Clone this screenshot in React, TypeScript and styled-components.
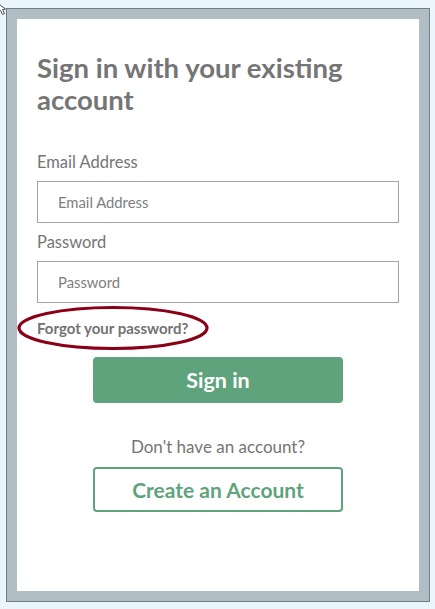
import React from 'react';
import styled, { createGlobalStyle } from 'styled-components';

const GlobalStyle = createGlobalStyle`
    html, body {
        margin: 0;
        padding: 0;
        background: #EAF5FC;
    }
    body {
        font-family: "Lato", "Liberation Sans", sans-serif;
    }
`;

export default function App() {
    return (
        <>
            <GlobalStyle />
            <Page>
                <Cursor viewBox="0 0 8 16" width="8" height="16">
                    <path d="M-5 1.5 L5.5 9 L2.5 9.5 L4.5 13.5 L2.5 14.5 L0.5 10.5 L-2 13 Z" fill="#fff" stroke="#3A3A3A" strokeWidth="0.9" />
                </Cursor>
                <Frame>
                    <Panel>
                        <Title>Sign in with your existing account</Title>

                        <Field>
                            <Label htmlFor="email">Email Address</Label>
                            <Input id="email" type="email" placeholder="Email Address" />
                        </Field>

                        <Field>
                            <Label htmlFor="password">Password</Label>
                            <Input id="password" type="password" placeholder="Password" />
                        </Field>

                        <ForgotWrap>
                            <ForgotLink href="#">Forgot your password?</ForgotLink>
                            <Circle viewBox="0 0 196 46" width="196" height="46">
                                <ellipse cx="97" cy="23" rx="94" ry="20.5" fill="none" stroke="#8A0016" strokeWidth="3.2" />
                            </Circle>
                        </ForgotWrap>

                        <Actions>
                            <PrimaryButton type="button">Sign in</PrimaryButton>
                            <Prompt>Don't have an account?</Prompt>
                            <OutlineButton type="button">Create an Account</OutlineButton>
                        </Actions>
                    </Panel>
                </Frame>
            </Page>
        </>
    );
}

const Page = styled.div`
    position: relative;
    padding: 8px 5px 7px 6px;
`;

const Cursor = styled.svg`
    position: absolute;
    left: 0;
    top: 0;
`;

const Frame = styled.div`
    width: 424px;
    height: 594px;
    box-sizing: border-box;
    border: 1px solid #6F7F88;
    background: #B0BDC4;
    padding: 10px;
`;

const Panel = styled.div`
    height: 100%;
    box-sizing: border-box;
    background: #FFFFFF;
    padding: 33px 20px 0 20px;
    display: flex;
    flex-direction: column;
`;

const Title = styled.h1`
    margin: 0 0 36px 0;
    font-size: 27.5px;
    line-height: 32px;
    font-weight: 700;
    color: #757575;
    max-width: 330px;
`;

const Field = styled.div`
    display: flex;
    flex-direction: column;
    gap: 9px;
    margin-bottom: 9px;
`;

const Label = styled.label`
    font-size: 16.5px;
    line-height: 20px;
    color: #757575;
`;

const Input = styled.input`
    box-sizing: border-box;
    height: 42px;
    width: 100%;
    border: 1px solid #A3A3A3;
    border-radius: 0;
    padding: 0 20px;
    font-family: inherit;
    font-size: 14.8px;
    color: #555;
    outline: none;

    &::placeholder {
        color: #7E7E7E;
    }
`;

const ForgotWrap = styled.div`
    position: relative;
    margin-top: -3px;
    height: 38px;
    display: flex;
    align-items: center;
`;

const ForgotLink = styled.a`
    font-size: 15px;
    font-weight: 700;
    color: #737373;
    text-decoration: none;
`;

const Circle = styled.svg`
    position: absolute;
    left: -21px;
    top: -4px;
    pointer-events: none;
`;

const Actions = styled.div`
    display: flex;
    flex-direction: column;
    align-items: center;
    margin-top: 10px;
`;

const PrimaryButton = styled.button`
    width: 250px;
    height: 46px;
    border: none;
    border-radius: 4px;
    background: #5FA37D;
    color: #FFFFFF;
    font-family: inherit;
    font-size: 21.5px;
    font-weight: 700;
    cursor: pointer;
`;

const Prompt = styled.p`
    margin: 34px 0 10px 0;
    font-size: 17px;
    line-height: 20px;
    color: #757575;
`;

const OutlineButton = styled.button`
    width: 250px;
    height: 45px;
    border: 2px solid #5FA37D;
    border-radius: 4px;
    background: #FFFFFF;
    color: #5FA37D;
    font-family: inherit;
    font-size: 21px;
    font-weight: 700;
    cursor: pointer;
`;
